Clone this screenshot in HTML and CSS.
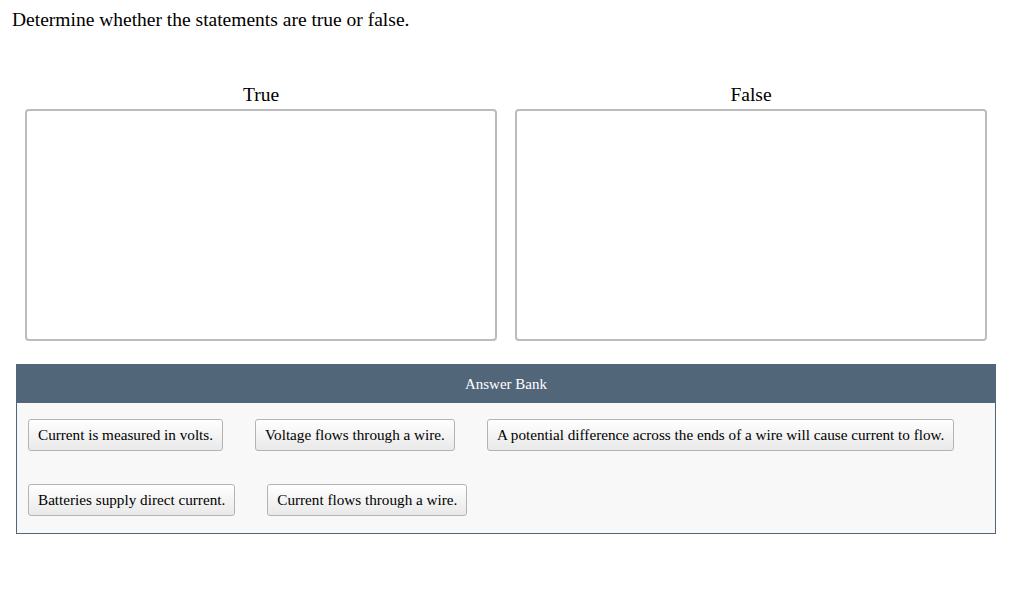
FILE: index.html
```html
<!DOCTYPE html>
<html lang="en">
<head>
  <meta charset="UTF-8" />
  <title>True or False</title>
  <link rel="stylesheet" href="styles.css">
</head>
<body>
  <div class="question">Determine whether the statements are true or false.</div>
  <div class="bins">
    <div class="bin">
      <div class="bin-label">True</div>
      <div class="bin-box"></div>
    </div>
    <div class="bin">
      <div class="bin-label">False</div>
      <div class="bin-box"></div>
    </div>
  </div>
  <div class="bank">
    <div class="bank-header">Answer Bank</div>
    <div class="bank-items">
      <div class="bank-row">
        <button class="item">Current is measured in volts.</button>
        <button class="item">Voltage flows through a wire.</button>
        <button class="item">A potential difference across the ends of a wire will cause current to flow.</button>
      </div>
      <div class="bank-row">
        <button class="item">Batteries supply direct current.</button>
        <button class="item">Current flows through a wire.</button>
      </div>
    </div>
  </div>
</body>
</html>
```

FILE: styles.css
```css
body {
  margin: 0;
  font-family: "Liberation Serif", "Times New Roman", serif;
  color: #000;
  background: #fff;
}
.question {
  font-size: 19.5px;
  padding: 9px 0 0 12px;
  line-height: 22px;
}
.bins {
  display: flex;
  gap: 18px;
  padding: 53px 37px 0 25px;
}
.bin {
  flex: 1;
}
.bin-label {
  text-align: center;
  font-size: 19.5px;
  line-height: 22px;
  margin-bottom: 3px;
}
.bin-box {
  height: 228px;
  border: 2px solid #bcbcbc;
  border-radius: 4px;
  background: #fff;
}
.bank {
  margin: 23px 28px 0 16px;
  border: 1px solid #52667a;
  background: #f8f8f8;
}
.bank-header {
  background: #52667a;
  color: #fff;
  text-align: center;
  font-size: 15px;
  height: 38px;
  line-height: 38px;
}
.bank-items {
  display: flex;
  flex-direction: column;
  gap: 33px;
  padding: 16px 11px 17px 11px;
}
.bank-row {
  display: flex;
  gap: 32px;
}
.item {
  font-family: "Liberation Serif", "Times New Roman", serif;
  font-size: 15.2px;
  color: #000;
  height: 32px;
  padding: 0 9px;
  border: 1px solid #b4b4b4;
  border-radius: 3px;
  background: linear-gradient(to bottom, #ffffff, #e9e9e9);
}
```
